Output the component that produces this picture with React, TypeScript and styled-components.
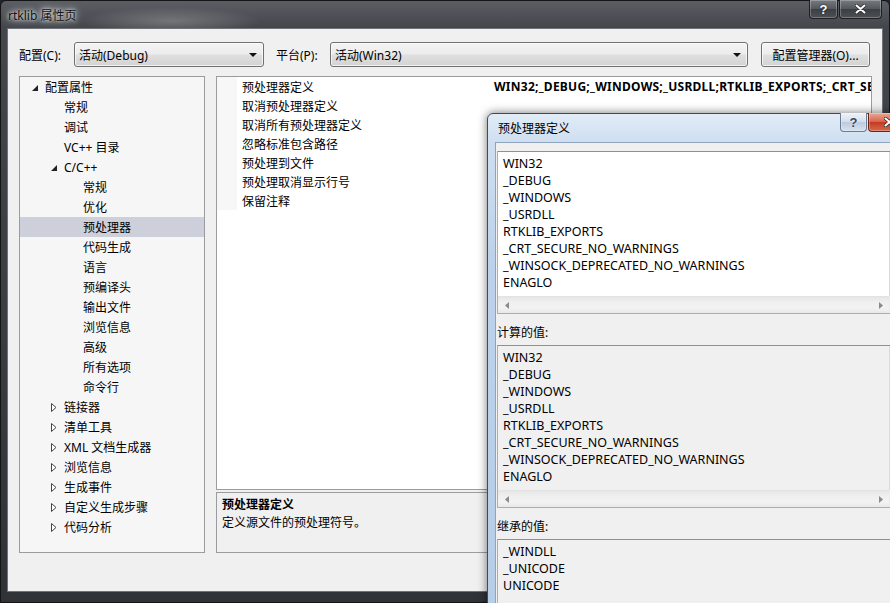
import React from 'react'
import styled, { createGlobalStyle } from 'styled-components'

const GlobalStyle = createGlobalStyle`
  html, body {
    margin: 0;
    padding: 0;
    background: #1e242c;
  }
  body {
    font-family: "Noto Sans", "Noto Sans CJK SC", sans-serif;
    font-size: 12px;
    color: #000;
  }
  * { box-sizing: border-box; }
`

const Desktop = styled.div`
  position: relative;
  width: 890px;
  height: 603px;
  overflow: hidden;
  background: #1e242c;
`

/* ---------- main window ---------- */

const MainWindow = styled.div`
  position: absolute;
  left: 0;
  top: 0;
  width: 890px;
  height: 603px;
  display: flex;
  flex-direction: column;
  border: 1px solid #141414;
  border-radius: 6px 6px 0 0;
  background:
    radial-gradient(ellipse 90px 14px at 170px 20px, rgba(150, 150, 150, 0.55), rgba(150, 150, 150, 0)),
    linear-gradient(180deg, #5b5f65 0px, #43474c 26px, #383b40 60%, #2f3236 100%);
`

const TitleBar = styled.div`
  height: 27px;
  display: flex;
  align-items: center;
  padding-left: 7px;
`

const TitleText = styled.span`
  font-size: 12px;
  color: #111;
  text-shadow: 0 0 3px #e8e8e8, 0 0 6px #d8d8d8, 0 0 10px #c8c8c8;
`

const CaptionGroup = styled.div<{ $right: number }>`
  display: flex;
  gap: 1px;
  margin-left: auto;
  margin-right: ${p => p.$right}px;
  align-self: flex-start;
  margin-top: -1px;
`

const CaptionButton = styled.div<{ $tone: 'dark' | 'light' | 'red'; $width: number }>`
  width: ${p => p.$width}px;
  height: 19px;
  display: flex;
  align-items: center;
  justify-content: center;
  font-family: "Liberation Sans", sans-serif;
  font-weight: bold;
  font-size: 13px;
  border: 1px solid ${p => (p.$tone === 'dark' ? '#1d1f22' : p.$tone === 'red' ? '#6b2417' : '#6a7c93')};
  border-top: none;
  border-radius: 0 0 4px 4px;
  color: ${p => (p.$tone === 'light' ? '#34465d' : '#fff')};
  text-shadow: ${p => (p.$tone === 'light' ? '0 0 2px #fff' : '0 0 2px #000')};
  box-shadow: inset 0 0 0 1px rgba(255, 255, 255, 0.25);
  background: ${p =>
    p.$tone === 'dark'
      ? 'linear-gradient(180deg, #777b81 0%, #55595e 48%, #3c3f43 52%, #4c5055 100%)'
      : p.$tone === 'red'
        ? 'linear-gradient(180deg, #eaa897 0%, #d8644b 48%, #c43b22 52%, #d66a4a 100%)'
        : 'linear-gradient(180deg, #eef3f9 0%, #d3deeb 48%, #bccbdd 52%, #d6e2ef 100%)'};
`

const Client = styled.div`
  flex: 1;
  margin: 0 6px 10px 6px;
  border: 1px solid #6f7378;
  background: #f0f0f0;
  padding: 13px 10px 0 11px;
  display: flex;
  flex-direction: column;
`

const Toolbar = styled.div`
  display: flex;
  align-items: center;
  height: 25px;
`

const FieldLabel = styled.span<{ $width: number; $gap?: number }>`
  width: ${p => p.$width}px;
  margin-left: ${p => p.$gap ?? 0}px;
  white-space: nowrap;
`

const ComboBox = styled.div<{ $width: number }>`
  position: relative;
  width: ${p => p.$width}px;
  height: 25px;
  display: flex;
  align-items: center;
  padding-left: 4px;
  border: 1px solid #707070;
  border-radius: 3px;
  background: linear-gradient(180deg, #f4f4f4 0%, #ececec 48%, #dfdfdf 52%, #d3d3d3 100%);
  box-shadow: inset 0 0 0 1px rgba(255, 255, 255, 0.7);

  &::after {
    content: '';
    position: absolute;
    right: 6px;
    top: 10px;
    border-left: 4px solid transparent;
    border-right: 4px solid transparent;
    border-top: 4px solid #111;
  }
`

const PushButton = styled.div`
  margin-left: 13px;
  width: 109px;
  height: 25px;
  display: flex;
  align-items: center;
  justify-content: center;
  border: 1px solid #707070;
  border-radius: 3px;
  background: linear-gradient(180deg, #f4f4f4 0%, #ececec 48%, #dfdfdf 52%, #d3d3d3 100%);
  box-shadow: inset 0 0 0 1px rgba(255, 255, 255, 0.7);
  white-space: nowrap;
`

const Body = styled.div`
  display: flex;
  gap: 11px;
  margin-top: 9px;
`

const TreePanel = styled.div`
  width: 186px;
  height: 477px;
  border: 1px solid #9a9ca0;
  background: #f6f6f6;
`

const TreeRow = styled.div<{ $level: number; $selected?: boolean }>`
  height: 20px;
  display: flex;
  align-items: center;
  padding-left: ${p => 12 + p.$level * 19}px;
  background: ${p => (p.$selected ? '#cdcfdb' : 'transparent')};
  white-space: nowrap;
`

const Expander = styled.span`
  width: 13px;
  height: 20px;
  display: flex;
  align-items: center;
`

const RightColumn = styled.div`
  flex: 1;
  min-width: 0;
  display: flex;
  flex-direction: column;
  gap: 2px;
`

const PropGrid = styled.div`
  height: 414px;
  border: 1px solid #9a9ca0;
  background: #fff;
  overflow: hidden;
`

const PropRow = styled.div`
  display: grid;
  grid-template-columns: 20px 253px minmax(0, 1fr);
  height: 19px;
  align-items: center;
`

const Gutter = styled.span`
  height: 19px;
  background: #f7f7f7;
`

const PropName = styled.span`
  padding-left: 5px;
  white-space: nowrap;
`

const PropValue = styled.span`
  padding-left: 4px;
  font-weight: bold;
  letter-spacing: 0.25px;
  white-space: nowrap;
  overflow: hidden;
`

const DescPane = styled.div`
  height: 61px;
  border: 1px solid #9a9ca0;
  background: #f0f0f0;
  padding: 3px 5px;
  line-height: 18px;
`

const DescTitle = styled.div`
  font-weight: bold;
`

/* ---------- preprocessor dialog ---------- */

const Dialog = styled.div`
  position: absolute;
  left: 487px;
  top: 113px;
  width: 430px;
  height: 520px;
  display: flex;
  flex-direction: column;
  border: 1px solid #3d4b5c;
  border-radius: 6px 6px 0 0;
  background: linear-gradient(180deg, #e2ecf7 0px, #cfdff1 27px, #bdd2ea 140px, #b6cde8 100%);
  box-shadow: 0 0 10px rgba(0, 0, 0, 0.55);
`

const DialogTitleBar = styled.div`
  height: 28px;
  display: flex;
  align-items: center;
  padding-left: 10px;
`

const DialogClient = styled.div`
  flex: 1;
  margin: 0 7px;
  border: 1px solid #8fa3bb;
  border-bottom: none;
  background: #f0f0f0;
  padding: 8px 1px 0 1px;
  display: flex;
  flex-direction: column;
`

const TextBox = styled.div<{ $readonly?: boolean; $bars?: boolean }>`
  display: grid;
  grid-template-columns: ${p => (p.$bars ? 'minmax(0, 1fr) 17px' : 'minmax(0, 1fr)')};
  grid-template-rows: ${p => (p.$bars ? '1fr 17px' : '1fr')};
  height: ${p => (p.$bars ? '163px' : '80px')};
  border: 1px solid #abadb3;
  border-top-color: #8e9096;
  background: ${p => (p.$readonly ? '#f0f0f0' : '#fff')};
`

const Lines = styled.div`
  padding: 3px 5px 0 5px;
  line-height: 17px;
  font-size: 12.5px;
  white-space: nowrap;
  overflow: hidden;
`

const HScroll = styled.div`
  display: flex;
  justify-content: space-between;
  align-items: center;
  border-top: 1px solid #e3e3e3;
  background: linear-gradient(180deg, #e6e6e6 0%, #efefef 30%, #f2f2f2 70%, #e8e8e8 100%);
`

const VScroll = styled.div`
  border-left: 1px solid #d9d9d9;
  background: linear-gradient(90deg, #e6e6e6 0%, #f0f0f0 50%, #e8e8e8 100%);
`

const ScrollCorner = styled.div`
  background: #ececec;
`

const ArrowBox = styled.span`
  width: 17px;
  height: 16px;
  display: flex;
  align-items: center;
  justify-content: center;
`

const SectionLabel = styled.div`
  height: 31px;
  display: flex;
  align-items: flex-end;
  padding-bottom: 4px;
  line-height: 17px;
`

/* ---------- data ---------- */

type TreeItem = { label: string; level: number; arrow?: 'open' | 'closed'; selected?: boolean }

const treeItems: TreeItem[] = [
  { label: '配置属性', level: 0, arrow: 'open' },
  { label: '常规', level: 1 },
  { label: '调试', level: 1 },
  { label: 'VC++ 目录', level: 1 },
  { label: 'C/C++', level: 1, arrow: 'open' },
  { label: '常规', level: 2 },
  { label: '优化', level: 2 },
  { label: '预处理器', level: 2, selected: true },
  { label: '代码生成', level: 2 },
  { label: '语言', level: 2 },
  { label: '预编译头', level: 2 },
  { label: '输出文件', level: 2 },
  { label: '浏览信息', level: 2 },
  { label: '高级', level: 2 },
  { label: '所有选项', level: 2 },
  { label: '命令行', level: 2 },
  { label: '链接器', level: 1, arrow: 'closed' },
  { label: '清单工具', level: 1, arrow: 'closed' },
  { label: 'XML 文档生成器', level: 1, arrow: 'closed' },
  { label: '浏览信息', level: 1, arrow: 'closed' },
  { label: '生成事件', level: 1, arrow: 'closed' },
  { label: '自定义生成步骤', level: 1, arrow: 'closed' },
  { label: '代码分析', level: 1, arrow: 'closed' },
]

const props = [
  { name: '预处理器定义', value: 'WIN32;_DEBUG;_WINDOWS;_USRDLL;RTKLIB_EXPORTS;_CRT_SECURE_NO_WARNINGS;_WINSOCK_DEPRECATED_NO_WARNINGS;ENAGLO;%(PreprocessorDefinitions)' },
  { name: '取消预处理器定义', value: '' },
  { name: '取消所有预处理器定义', value: '' },
  { name: '忽略标准包含路径', value: '' },
  { name: '预处理到文件', value: '' },
  { name: '预处理取消显示行号', value: '' },
  { name: '保留注释', value: '' },
]

const defines = [
  'WIN32',
  '_DEBUG',
  '_WINDOWS',
  '_USRDLL',
  'RTKLIB_EXPORTS',
  '_CRT_SECURE_NO_WARNINGS',
  '_WINSOCK_DEPRECATED_NO_WARNINGS',
  'ENAGLO',
]

const inherited = ['_WINDLL', '_UNICODE', 'UNICODE']

/* ---------- small drawings ---------- */

const OpenArrow = () => (
  <svg width="7" height="7" viewBox="0 0 7 7" style={{ marginTop: 3 }}>
    <polygon points="6,0 6,6 0,6" fill="#222" />
  </svg>
)

const ClosedArrow = () => (
  <svg width="6" height="9" viewBox="0 0 6 9">
    <polygon points="0.5,0.5 5,4.5 0.5,8.5" fill="#fff" stroke="#444" strokeWidth="1" />
  </svg>
)

const CloseGlyph = () => (
  <svg width="11" height="10" viewBox="0 0 11 10">
    <path d="M1.5 1.5 L9.5 8.5 M9.5 1.5 L1.5 8.5" stroke="#2a2a2a" strokeWidth="3.6" strokeLinecap="round" />
    <path d="M1.5 1.5 L9.5 8.5 M9.5 1.5 L1.5 8.5" stroke="#fff" strokeWidth="2" strokeLinecap="round" />
  </svg>
)

const ScrollArrow = ({ dir }: { dir: 'left' | 'right' }) => (
  <svg width="4" height="7" viewBox="0 0 4 7">
    <polygon points={dir === 'left' ? '4,0 0,3.5 4,7' : '0,0 4,3.5 0,7'} fill="#8a8a8a" />
  </svg>
)

const ListBox = ({ items, readonly }: { items: string[]; readonly?: boolean }) => (
  <TextBox $readonly={readonly} $bars>
    <Lines>
      {items.map(t => (
        <div key={t}>{t}</div>
      ))}
    </Lines>
    <VScroll />
    <HScroll>
      <ArrowBox>
        <ScrollArrow dir="left" />
      </ArrowBox>
      <ArrowBox>
        <ScrollArrow dir="right" />
      </ArrowBox>
    </HScroll>
    <ScrollCorner />
  </TextBox>
)

export default function App() {
  return (
    <>
      <GlobalStyle />
      <Desktop>
        <MainWindow>
          <TitleBar>
            <TitleText>rtklib 属性页</TitleText>
            <CaptionGroup $right={7}>
              <CaptionButton $tone="dark" $width={29}>?</CaptionButton>
              <CaptionButton $tone="dark" $width={43}>
                <CloseGlyph />
              </CaptionButton>
            </CaptionGroup>
          </TitleBar>
          <Client>
            <Toolbar>
              <FieldLabel $width={55}>配置(C):</FieldLabel>
              <ComboBox $width={190}>活动(Debug)</ComboBox>
              <FieldLabel $width={54} $gap={12}>平台(P):</FieldLabel>
              <ComboBox $width={418}>活动(Win32)</ComboBox>
              <PushButton>配置管理器(O)...</PushButton>
            </Toolbar>
            <Body>
              <TreePanel>
                {treeItems.map((item, i) => (
                  <TreeRow key={i} $level={item.level} $selected={item.selected}>
                    <Expander>
                      {item.arrow === 'open' && <OpenArrow />}
                      {item.arrow === 'closed' && <ClosedArrow />}
                    </Expander>
                    {item.label}
                  </TreeRow>
                ))}
              </TreePanel>
              <RightColumn>
                <PropGrid>
                  {props.map(p => (
                    <PropRow key={p.name}>
                      <Gutter />
                      <PropName>{p.name}</PropName>
                      <PropValue>{p.value}</PropValue>
                    </PropRow>
                  ))}
                </PropGrid>
                <DescPane>
                  <DescTitle>预处理器定义</DescTitle>
                  <div>定义源文件的预处理符号。</div>
                </DescPane>
              </RightColumn>
            </Body>
          </Client>
        </MainWindow>

        <Dialog>
          <DialogTitleBar>
            <span>预处理器定义</span>
            <CaptionGroup $right={5}>
              <CaptionButton $tone="light" $width={27}>?</CaptionButton>
              <CaptionButton $tone="red" $width={43}>
                <CloseGlyph />
              </CaptionButton>
            </CaptionGroup>
          </DialogTitleBar>
          <DialogClient>
            <ListBox items={defines} />
            <SectionLabel>计算的值:</SectionLabel>
            <ListBox items={defines} readonly />
            <SectionLabel>继承的值:</SectionLabel>
            <TextBox $readonly>
              <Lines>
                {inherited.map(t => (
                  <div key={t}>{t}</div>
                ))}
              </Lines>
            </TextBox>
          </DialogClient>
        </Dialog>
      </Desktop>
    </>
  )
}
